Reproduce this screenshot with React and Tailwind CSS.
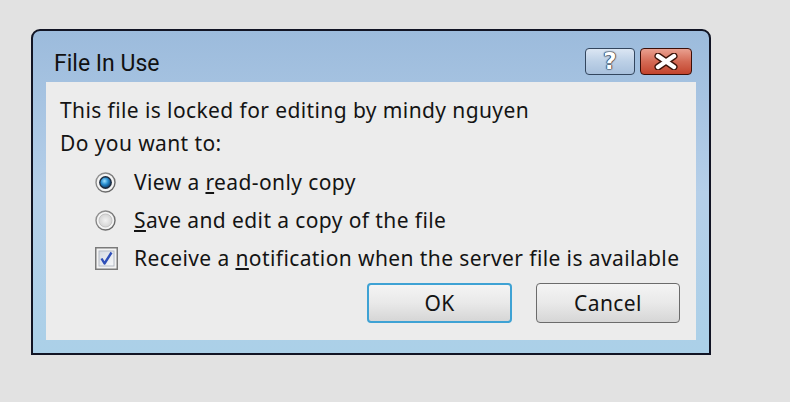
import React from "react";

const FONT = { fontFamily: '"Segoe UI", "Noto Sans", "Open Sans", sans-serif' };

function Radio({ checked }) {
  return (
    <svg width="21" height="21" viewBox="0 0 21 21" className="shrink-0">
      <defs>
        <linearGradient id={checked ? "rg1" : "rg0"} x1="0" y1="0" x2="1" y2="1">
          <stop offset="0" stopColor="#9a9a9a" />
          <stop offset="1" stopColor="#5d5d5d" />
        </linearGradient>
        <radialGradient id="dot" cx="0.4" cy="0.35" r="0.7">
          <stop offset="0" stopColor="#9fe0ff" />
          <stop offset="0.5" stopColor="#2a8fd0" />
          <stop offset="1" stopColor="#0c3d70" />
        </radialGradient>
        <radialGradient id="empty" cx="0.5" cy="0.5" r="0.6">
          <stop offset="0" stopColor="#f2f2f2" />
          <stop offset="1" stopColor="#cfcfcf" />
        </radialGradient>
      </defs>
      <circle cx="10.5" cy="10.5" r="9.5" fill="#f4f4f4" stroke={`url(#${checked ? "rg1" : "rg0"})`} strokeWidth="1.4" />
      {checked ? (
        <>
          <circle cx="10.5" cy="10.5" r="6.4" fill="#1d2a3c" />
          <circle cx="10.5" cy="10.5" r="5" fill="url(#dot)" />
        </>
      ) : (
        <circle cx="10.5" cy="10.5" r="6.5" fill="url(#empty)" stroke="#c4c4c4" strokeWidth="1" />
      )}
    </svg>
  );
}

function Check() {
  return (
    <svg width="23" height="23" viewBox="0 0 23 23" className="shrink-0">
      <defs>
        <linearGradient id="cb" x1="0" y1="0" x2="1" y2="1">
          <stop offset="0" stopColor="#d6dbe3" />
          <stop offset="1" stopColor="#f7f8fa" />
        </linearGradient>
      </defs>
      <rect x="0.75" y="0.75" width="21.5" height="21.5" fill="#f3f3f3" stroke="#7a7a7a" strokeWidth="1.5" />
      <rect x="4" y="4" width="15" height="15" fill="url(#cb)" stroke="#b6bcc6" strokeWidth="1" />
      <path d="M6.5 11.5 L9.5 16.5 L16.5 5.5" fill="none" stroke="#2f4fb8" strokeWidth="2.4" strokeLinejoin="round" />
    </svg>
  );
}

function Option({ control, children, gap = "gap-[18px]" }) {
  return (
    <div className={`flex h-[38px] items-center ${gap}`}>
      {control}
      <span className="whitespace-nowrap">{children}</span>
    </div>
  );
}

export default function App() {
  return (
    <div className="h-[402px] w-[790px] bg-[#e2e2e2] pl-[31px] pt-[29px]" style={FONT}>
      <div className="flex h-[326px] w-[680px] flex-col rounded-t-[9px] border-2 border-[#111424] bg-gradient-to-b from-[#9cbbdc] via-[#b5cfe9] to-[#abd0e8] px-[13px] pb-[13px]">
        {/* title bar */}
        <div className="flex h-[51px] justify-between pl-[8px] pr-[4px]">
          <span className="pt-[21px] text-[23px] leading-none text-[#111111]" style={{ fontFamily: '"Segoe UI", Roboto, sans-serif' }}>
            File In Use
          </span>
          <div className="flex gap-[5px] pt-[17px]">
            <div className="flex h-[27px] w-[50px] items-center justify-center rounded-[4px] border border-[#33465e] bg-gradient-to-b from-[#dbe6f3] via-[#bcd0e6] to-[#a8c0dc] text-[23px] font-bold leading-none text-white" style={{ fontFamily: '"DejaVu Sans", sans-serif', textShadow: "0 0 1px #1c2a3d, 0 0 1px #1c2a3d, 0 0 1px #1c2a3d, 0 0 2px #1c2a3d" }}>
              ?
            </div>
            <div className="flex h-[27px] w-[52px] items-center justify-center rounded-[4px] border border-[#3b0f08] bg-gradient-to-b from-[#e9a090] via-[#d46a55] to-[#c2432c]">
              <svg width="24" height="17" viewBox="0 0 24 17">
                <path d="M4 3 L20 14 M20 3 L4 14" stroke="#3a1208" strokeWidth="7" strokeLinecap="round" />
                <path d="M4 3 L20 14 M20 3 L4 14" stroke="#ffffff" strokeWidth="4.4" strokeLinecap="round" />
              </svg>
            </div>
          </div>
        </div>

        {/* content panel */}
        <div className="flex flex-1 flex-col bg-[#ececec] px-[14px] pb-[17px] pt-[12px] text-[21px] leading-[33px] tracking-[0.4px] text-[#141414]">
          <p className="whitespace-nowrap">This file is locked for editing by mindy nguyen</p>
          <p>Do you want to:</p>
          <div className="mt-[3px] flex flex-col pl-[35px]">
            <Option control={<Radio checked />}>
              View a <span className="underline underline-offset-2">r</span>ead-only copy
            </Option>
            <Option control={<Radio />}>
              <span className="underline underline-offset-2">S</span>ave and edit a copy of the file
            </Option>
            <Option control={<Check />} gap="gap-[16px]">
              Receive a <span className="underline underline-offset-2">n</span>otification when the server file is available
            </Option>
          </div>
          <div className="mt-[6px] flex justify-end gap-[24px] pr-[2px]">
            <button className="h-[40px] w-[145px] rounded-[4px] border-2 border-[#3ea2d4] bg-gradient-to-b from-[#f4f4f4] via-[#e9e9e9] to-[#d6d6d6] text-[21px] text-[#141414]">
              OK
            </button>
            <button className="h-[40px] w-[144px] rounded-[4px] border border-[#6b6b6b] bg-gradient-to-b from-[#f4f4f4] via-[#e9e9e9] to-[#d6d6d6] text-[21px] text-[#141414]">
              Cancel
            </button>
          </div>
        </div>
      </div>
    </div>
  );
}
